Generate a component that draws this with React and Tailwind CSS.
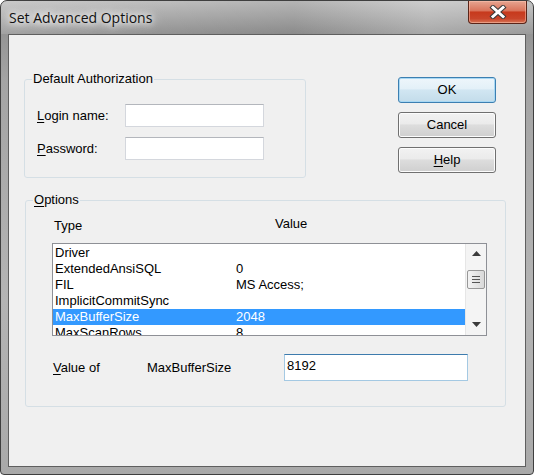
function U({ children }) {
  return <span className="underline underline-offset-[2px] decoration-[1px]">{children}</span>;
}

function GroupBox({ label, className = "", children }) {
  return (
    <div className={`relative border border-[#d5dfe5] rounded-[3px] ${className}`}>
      <span className="absolute -top-[9px] left-[7px] px-px bg-[#f0f0f0] leading-[16px]">{label}</span>
      {children}
    </div>
  );
}

function WinButton({ children, primary }) {
  const look = primary
    ? "border-[#3c7fb1] bg-[linear-gradient(180deg,#eef6fb_0%,#e3f0f8_45%,#d1e6f2_50%,#c3dcea_100%)] shadow-[inset_0_0_0_1px_#a8d8f4]"
    : "border-[#707070] bg-[linear-gradient(180deg,#f2f2f2_0%,#ebebeb_45%,#dddddd_50%,#cfcfcf_100%)] shadow-[inset_0_0_0_1px_#fcfcfc]";
  return (
    <button className={`w-[98px] h-[26px] border rounded-[3px] flex items-center justify-center text-[13px] text-black ${look}`}>
      {children}
    </button>
  );
}

const rows = [
  ["Driver", ""],
  ["ExtendedAnsiSQL", "0"],
  ["FIL", "MS Access;"],
  ["ImplicitCommitSync", ""],
  ["MaxBufferSize", "2048"],
  ["MaxScanRows", "8"],
];

function Arrow({ down }) {
  return (
    <svg width="9" height="5" viewBox="0 0 9 5">
      <polygon points={down ? "0,0 9,0 4.5,5" : "0,5 9,5 4.5,0"} fill="#3b3b3b" />
    </svg>
  );
}

function ScrollBar() {
  return (
    <div className="w-[21px] flex flex-col bg-[#f4f4f4] border-l border-[#e6e6e6]">
      <div className="h-[17px] flex items-center justify-center pt-[1px]">
        <Arrow />
      </div>
      <div className="flex-1">
        <div className="mt-[9px] ml-[1px] w-[18px] h-[19px] border border-[#979797] rounded-[2px] bg-[linear-gradient(90deg,#f3f3f3,#e5e5e5_50%,#d9d9d9)] flex flex-col items-center justify-center gap-[2px]">
          <div className="w-[8px] h-px bg-[#555]" />
          <div className="w-[8px] h-px bg-[#555]" />
          <div className="w-[8px] h-px bg-[#555]" />
        </div>
      </div>
      <div className="h-[17px] flex items-center justify-center pb-[4px]">
        <Arrow down />
      </div>
    </div>
  );
}

export default function App() {
  return (
    <div className="w-[534px] h-[475px] flex flex-col border border-[#3f3f3f] rounded-t-[7px] rounded-b-[4px] overflow-hidden bg-[linear-gradient(180deg,#c2c2c2_0px,#aaaaaa_18px,#959595_33px,#a4a4a4_80px,#b4b4b4_300px,#a9a9a9_475px)] font-['Liberation_Sans',Arial,sans-serif] text-[13px] text-black">
      <div className="h-[33px] flex items-start bg-[linear-gradient(90deg,rgba(255,255,255,0.12)_0%,rgba(0,0,0,0.02)_30%,rgba(0,0,0,0.07)_55%,rgba(255,255,255,0.18)_80%,rgba(255,255,255,0.05)_100%)]">
        <span className="pl-[8px] pt-[8px] leading-[18px] text-[14px] font-['Open_Sans','Noto_Sans',sans-serif] text-[#111] [text-shadow:0_0_6px_#fff,0_0_10px_#fff,0_0_14px_#fff]">
          Set Advanced Options
        </span>
        <button className="ml-auto mr-[6px] w-[59px] h-[23px] rounded-b-[4px] border border-t-0 border-[#5a2418] bg-[linear-gradient(180deg,#e6a591_0%,#d9735a_45%,#c7391c_50%,#c9452a_80%,#d77556_100%)] shadow-[inset_0_0_0_1px_rgba(255,200,180,0.5)] flex items-center justify-center">
          <svg width="18" height="14" viewBox="0 0 18 14">
            <path d="M4 2.5 L14 11.5 M14 2.5 L4 11.5" stroke="#3b3b3b" strokeWidth="5" strokeLinecap="square" />
            <path d="M4 2.5 L14 11.5 M14 2.5 L4 11.5" stroke="#ffffff" strokeWidth="3" strokeLinecap="square" />
          </svg>
        </button>
      </div>

      <div className="flex-1 mx-[7px] mb-[7px] border border-[#5f5f5f] bg-[#f0f0f0] flex flex-col">
        <div className="flex items-start pt-[42px]">
          <GroupBox label="Default Authorization" className="ml-[15px] mt-[2px] w-[282px] h-[99px]">
            <div className="pt-[24px] pl-[12px] flex flex-col gap-[10px]">
              <div className="flex items-center">
                <span className="w-[88px]"><U>L</U>ogin name:</span>
                <div className="w-[139px] h-[23px] bg-white border border-[#d4d7dd] border-t-[#b3b6bc]" />
              </div>
              <div className="flex items-center">
                <span className="w-[88px]"><U>P</U>assword:</span>
                <div className="w-[139px] h-[23px] bg-white border border-[#d4d7dd] border-t-[#b3b6bc]" />
              </div>
            </div>
          </GroupBox>
          <div className="ml-[92px] flex flex-col gap-[9px]">
            <WinButton primary>OK</WinButton>
            <WinButton>Cancel</WinButton>
            <WinButton><U>H</U>elp</WinButton>
          </div>
        </div>

        <GroupBox label={<><U>O</U>ptions</>} className="ml-[16px] mt-[22px] w-[481px] h-[207px]">
          <div className="h-[42px] pt-[13px] pl-[28px] flex items-start">
            <span className="w-[221px] mt-[2px]">Type</span>
            <span>Value</span>
          </div>
          <div className="ml-[26px] w-[435px] h-[93px] border border-[#8e9096] bg-white flex">
            <div className="flex-1 overflow-hidden pt-px">
              {rows.map(([k, v]) => {
                const sel = k === "MaxBufferSize";
                return (
                  <div key={k} className={`h-[16px] flex items-center pl-[2px] leading-[16px] ${sel ? "bg-[#3399ff] text-white" : ""}`}>
                    <span className="w-[181px] whitespace-nowrap">{k}</span>
                    <span>{v}</span>
                  </div>
                );
              })}
            </div>
            <ScrollBar />
          </div>
          <div className="mt-[18px] pl-[27px] flex items-center">
            <span className="w-[94px]"><U>V</U>alue of</span>
            <span className="w-[137px]">MaxBufferSize</span>
            <div className="w-[184px] h-[27px] bg-white border border-[#a4c9e3] border-t-[#3d7bad] pl-[2px] pt-[3px] leading-[16px]">
              8192
            </div>
          </div>
        </GroupBox>
      </div>
    </div>
  );
}
